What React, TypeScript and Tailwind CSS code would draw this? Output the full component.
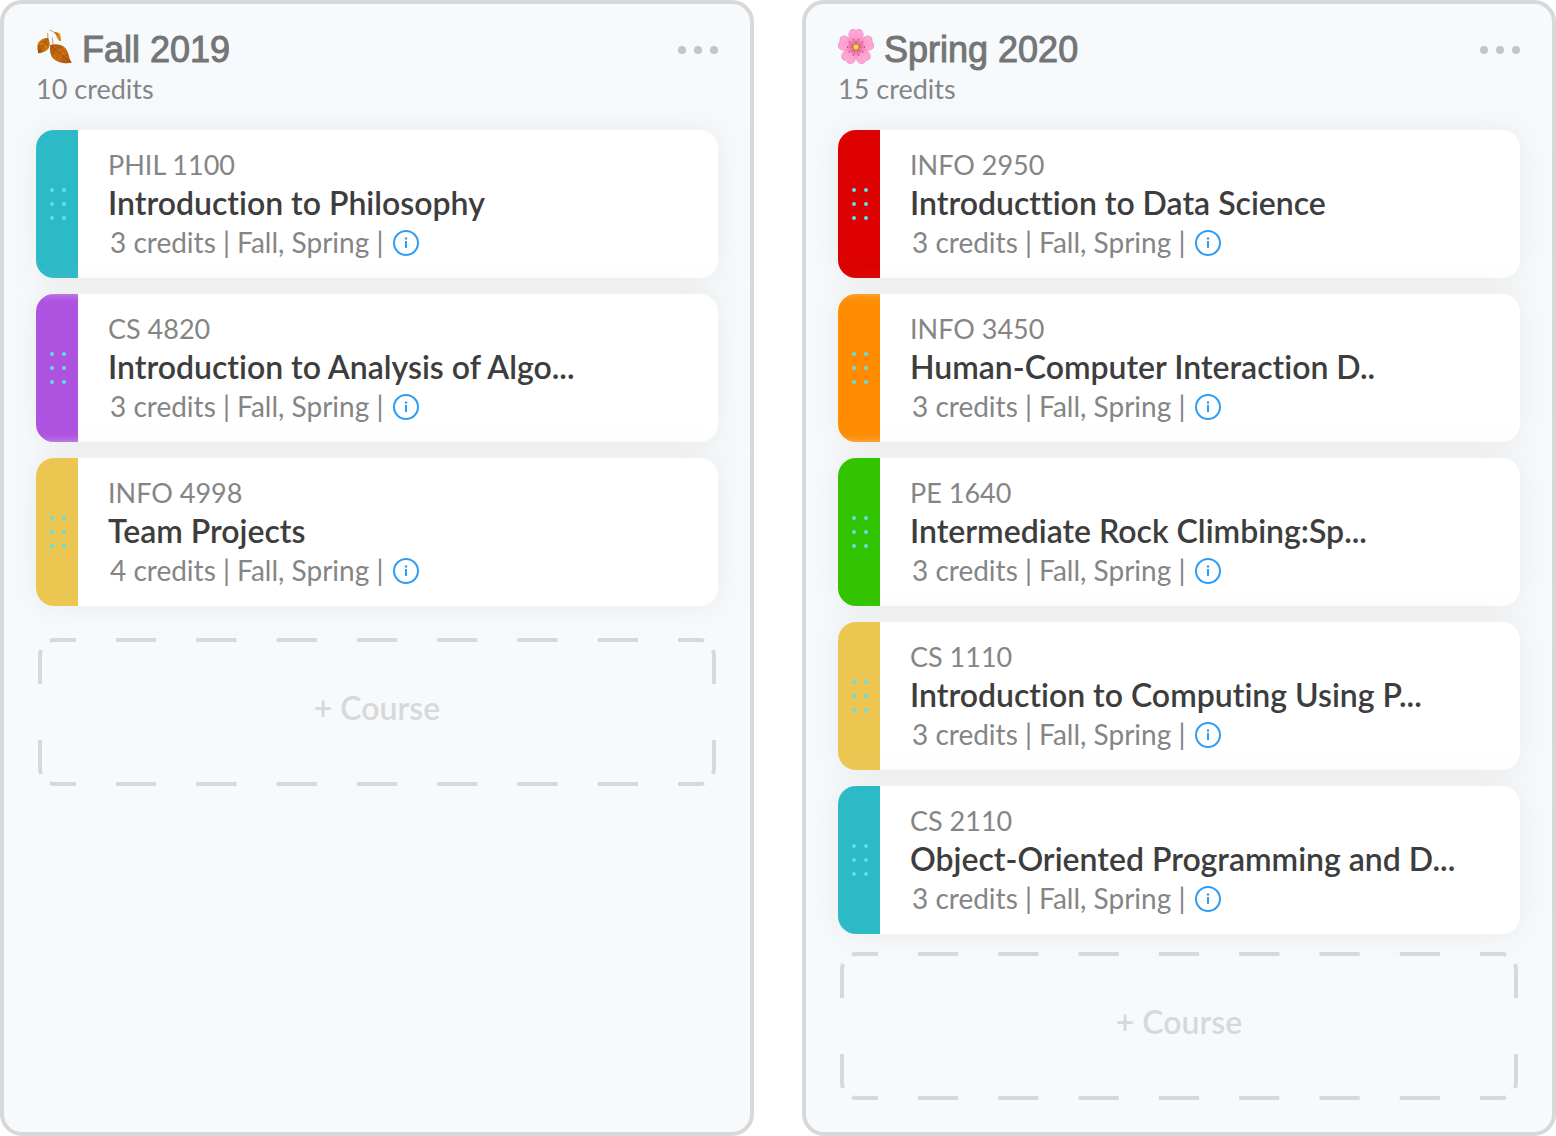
import React from "react";

type Course = { code: string; title: string; credits: number; color: string };
type Semester = {
  name: string;
  credits: number;
  icon: React.ReactNode;
  courses: Course[];
  addGap: string;
};

function LeavesIcon() {
  return (
    <svg viewBox="6 8 36 36" className="size-9 shrink-0 self-start" aria-hidden="true">
      <defs>
        <linearGradient id="leafBig" x1="0" y1="0" x2="1" y2="1">
          <stop offset="0" stopColor="#a4520f" />
          <stop offset="0.5" stopColor="#cc6f12" />
          <stop offset="1" stopColor="#a64e08" />
        </linearGradient>
        <linearGradient id="leafLeft" x1="1" y1="0" x2="0" y2="1">
          <stop offset="0" stopColor="#b4610f" />
          <stop offset="0.55" stopColor="#d57a14" />
          <stop offset="1" stopColor="#8a3d05" />
        </linearGradient>
        <linearGradient id="leafTop" x1="0" y1="0" x2="1" y2="1">
          <stop offset="0" stopColor="#a85a10" />
          <stop offset="0.6" stopColor="#f0a02a" />
          <stop offset="1" stopColor="#d9820f" />
        </linearGradient>
      </defs>
      <path d="M17.6 13.4 18 20M22.4 18 23 25" fill="none" stroke="#dfa565" strokeWidth="1.2" strokeLinecap="round" />
      <path d="M20 10.5c1.5 0 3.500.8 5 2.500" fill="none" stroke="#d79a5b" strokeWidth="1.1" strokeLinecap="round" />
      <path d="M24.300 12.300c3-.4 5.700.2 6.200 2.700.4 2 .1 4 .5 6.200-2.500-.6-3.800-1.900-4.300-4-.4-2-1.300-3.300-2.400-4.900Z" fill="url(#leafTop)" />
      <path d="M25 12.600c2.500 2 4.500 4.600 5.500 8" fill="none" stroke="#a8590a" strokeWidth="0.6" />
      <path d="M18 18c-4 0-8.500 1.800-10 5.500-1.200 3.400-.2 6.500.3 9.800 4.200-.6 8.500-2 10.500-5.300 1.700-3 .9-6.800-.8-10Z" fill="url(#leafLeft)" />
      <path d="M18 18.200c-2.800 4.400-6.300 9.200-9.200 14.600M15.800 21.500l-5 .9M13.300 25.200l-4.700 1.300M15.500 22l2.400 3.600M13 26l2.200 3.600" fill="none" stroke="#8a4008" strokeWidth="0.5" />
      <path d="M20.300 25.300c3.900-1.700 9.300-1.500 13.300 1.100 3.500 2.400 4.600 6.200 5.400 9.800.5 2.400 1 4 2.800 6.200-2.600.2-4.900 1.500-8.500.7-5-.9-10-3.200-11.900-7.100-1.700-3.400-1.600-7.300-1.100-10.700Z" fill="url(#leafBig)" />
      <path d="M20.500 25.500c6 4 11.500 9.500 20.800 16.700" fill="none" stroke="#7f3803" strokeWidth="0.7" />
      <path d="M25.500 29l6.300-2.200M29.500 32.300l6.300-1.800M33.500 35.700l4.800-.8M25 29l-2.800 5.500M29 32.300l-2.500 6.300M33.300 36l-1.500 5.600" fill="none" stroke="#964808" strokeWidth="0.5" />
      <path d="M23 26.200c5 3.800 10.200 8.300 15.500 13" fill="none" stroke="#e58f32" strokeWidth="0.5" />
    </svg>
  );
}

function BlossomIcon() {
  const angles = [0, 72, 144, 216, 288];
  return (
    <svg viewBox="-18 -19 36 36" className="size-9 shrink-0 self-start" aria-hidden="true">
      <defs>
        <radialGradient id="petal" gradientUnits="userSpaceOnUse" cx="0" cy="0" r="18">
          <stop offset="0" stopColor="#d0507f" />
          <stop offset="0.25" stopColor="#e9719f" />
          <stop offset="0.5" stopColor="#fb97c8" />
          <stop offset="0.9" stopColor="#fda9d8" />
          <stop offset="1" stopColor="#f08dc2" />
        </radialGradient>
        <radialGradient id="pollen">
          <stop offset="0" stopColor="#ffe88a" />
          <stop offset="0.6" stopColor="#ecc046" />
          <stop offset="1" stopColor="#b9761f" />
        </radialGradient>
      </defs>
      {angles.map((angle) => (
        <g key={angle} transform={`rotate(${angle})`}>
          <path
            d="M0 0C-3-4.500-8-8.500-7.300-13.500-6.700-17.500-2.800-18.800 0-16.800 2.800-18.800 6.700-17.500 7.300-13.500 8-8.500 3-4.500 0 0Z"
            fill="url(#petal)"
            stroke="#ec86bb"
            strokeWidth="0.4"
          />
          <path d="M0-8V-14M-2.500-9-4-13M2.500-9 4-13" fill="none" stroke="#ffbfe2" strokeWidth="0.5" />
          <path d="M0-3V-7M-1-3-2.600-7M1-3 2.600-7" fill="none" stroke="#d8588b" strokeWidth="0.4" />
          <circle cx="-2.700" cy="-8" r="0.6" fill="#a32b55" />
          <circle cx="2.700" cy="-8" r="0.6" fill="#a32b55" />
        </g>
      ))}
      <circle r="3.600" fill="url(#pollen)" />
    </svg>
  );
}

const semesters: Semester[] = [
  {
    name: "Fall 2019",
    credits: 10,
    icon: <LeavesIcon />,
    addGap: "mt-8",
    courses: [
      { code: "PHIL 1100", title: "Introduction to Philosophy", credits: 3, color: "bg-[#2cbbc6]" },
      {
        code: "CS 4820",
        title: "Introduction to Analysis of Algo...",
        credits: 3,
        color: "bg-[#ae52e0] shadow-[inset_0_8px_8px_-8px_#cf9aee,inset_0_-8px_8px_-8px_#cf9aee]",
      },
      { code: "INFO 4998", title: "Team Projects", credits: 4, color: "bg-[#ebc752]" },
    ],
  },
  {
    name: "Spring 2020",
    credits: 15,
    icon: <BlossomIcon />,
    addGap: "mt-[18px]",
    courses: [
      { code: "INFO 2950", title: "Introducttion to Data Science", credits: 3, color: "bg-[#dd0000]" },
      {
        code: "INFO 3450",
        title: "Human-Computer Interaction D..",
        credits: 3,
        color: "bg-[#ff8c00] shadow-[inset_0_8px_8px_-8px_#ffb561,inset_0_-8px_8px_-8px_#ffb561]",
      },
      { code: "PE 1640", title: "Intermediate Rock Climbing:Sp...", credits: 3, color: "bg-[#32c400]" },
      { code: "CS 1110", title: "Introduction to Computing Using P...", credits: 3, color: "bg-[#ebc752]" },
      { code: "CS 2110", title: "Object-Oriented Programming and D...", credits: 3, color: "bg-[#2cbbc6]" },
    ],
  },
];

function CourseCard({ course }: { course: Course }) {
  return (
    <li className="flex h-[148px] overflow-hidden rounded-[18px] bg-white shadow-[0_0_32px_rgba(205,200,185,0.3)]">
      <button
        type="button"
        aria-label={`Drag ${course.code}`}
        className={`flex w-[42px] shrink-0 items-center justify-center pl-[2px] ${course.color}`}
      >
        <svg viewBox="0 0 16 32" className="h-8 w-4" fill="#5fe0e9" aria-hidden="true">
          <circle cx="2" cy="2" r="2" />
          <circle cx="14" cy="2" r="2" />
          <circle cx="2" cy="16" r="2" />
          <circle cx="14" cy="16" r="2" />
          <circle cx="2" cy="30" r="2" />
          <circle cx="14" cy="30" r="2" />
        </svg>
      </button>
      <div className="flex min-w-0 flex-col pt-4 pl-[30px] whitespace-nowrap">
        <p className="text-[27px] leading-[38px] text-[#858585]">{course.code}</p>
        <h3 className="text-[32px] leading-[38px] font-semibold text-[#3d3d3d]">{course.title}</h3>
        <div className="flex items-center gap-[10px] pl-[2px] text-[28px] leading-10 text-[#858585]">
          <span>{course.credits} credits | Fall, Spring |</span>
          <button type="button" aria-label={`About ${course.title}`}>
            <svg viewBox="0 0 26 26" className="mt-[2px] size-[26px]" aria-hidden="true">
              <circle cx="13" cy="13" r="12" fill="none" stroke="#2d9cf4" strokeWidth="2" />
              <circle cx="13" cy="8.500" r="1.200" fill="#2d9cf4" />
              <path d="M13 11v7" stroke="#2d9cf4" strokeWidth="2" />
            </svg>
          </button>
        </div>
      </div>
    </li>
  );
}

function DashedFrame() {
  return (
    <svg
      viewBox="0 0 678 148"
      preserveAspectRatio="none"
      className="absolute inset-0 size-full"
      fill="none"
      stroke="#d8d8d8"
      strokeWidth="4"
      aria-hidden="true"
    >
      <path d="M38 2H16Q14 2 12 3M640 2H662Q664 2 666 3M38 146H16Q14 146 12 145M640 146H662Q664 146 666 145" />
      <path d="M2 46V18Q2 15 3 12M676 46V18Q676 15 675 12M2 102V130Q2 133 3 136M676 102V130Q676 133 675 136" />
      <path d="M78 2H600M78 146H600" strokeDasharray="40.150" />
    </svg>
  );
}

function SemesterPanel({ semester }: { semester: Semester }) {
  return (
    <section className="flex min-w-0 flex-col rounded-[22px] border-4 border-[#d8d8d8] bg-[#f7fafd] px-8 pt-6 pb-8">
      <header>
        <div className="flex h-11 items-center">
          {semester.icon}
          <h2 className="ml-[10px] font-['Liberation_Sans',Arial,sans-serif] text-4xl text-[#757575] [-webkit-text-stroke:1px_#757575]">
            {semester.name}
          </h2>
          <button type="button" aria-label={`${semester.name} options`} className="ml-auto flex gap-2">
            <span className="size-2 rounded-full bg-[#c4c4c4]" />
            <span className="size-2 rounded-full bg-[#c4c4c4]" />
            <span className="size-2 rounded-full bg-[#c4c4c4]" />
          </button>
        </div>
        <p className="text-[27px] leading-[34px] text-[#858585]">{semester.credits} credits</p>
      </header>
      <ul className="mt-6 flex flex-col gap-4">
        {semester.courses.map((course) => (
          <CourseCard key={course.code} course={course} />
        ))}
      </ul>
      <button
        type="button"
        className={`relative mx-[2px] flex h-[148px] items-center justify-center pb-2 text-[32px] font-semibold text-[#d8d8d8] ${semester.addGap}`}
      >
        <DashedFrame />
        <span>+ Course</span>
      </button>
    </section>
  );
}

export default function App() {
  return (
    <main className="grid grid-cols-2 gap-12 bg-white font-[Lato,sans-serif] [font-variant-ligatures:none]">
      {semesters.map((semester) => (
        <SemesterPanel key={semester.name} semester={semester} />
      ))}
    </main>
  );
}
